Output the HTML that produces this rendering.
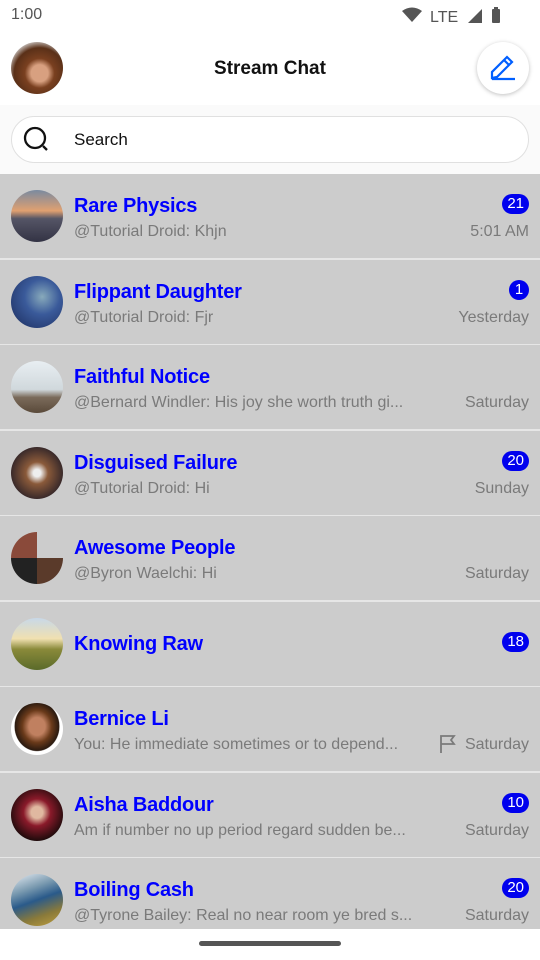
<!DOCTYPE html>
<html><head><meta charset="utf-8"><style>
*{margin:0;padding:0;box-sizing:border-box}
body{width:540px;height:960px;overflow:hidden;background:#fff;font-family:"Liberation Sans",Roboto,sans-serif;position:relative}
.abs{position:absolute}
.row{position:absolute;left:0;width:540px;height:84px;background:#cccccc}
.av{position:absolute;left:11px;top:16px;width:52px;height:52px;border-radius:50%}
.t{position:absolute;left:74px;top:21px;font-size:20px;font-weight:bold;color:#0000ff;white-space:nowrap;letter-spacing:-0.2px}
.s{position:absolute;left:74px;top:49px;font-size:16px;color:#7a7a7a;white-space:nowrap}
.d{position:absolute;right:11px;top:49px;font-size:16px;color:#7a7a7a}
.b{position:absolute;right:11px;top:20px;height:20px;min-width:20px;padding:0 5px;border-radius:10px;background:#0000ee;color:#fff;font-size:15px;line-height:20px;text-align:center}
</style></head><body>
<div class="abs" style="left:11px;top:6px;font-size:16px;color:#555">1:00</div>
<svg class="abs" style="left:402px;top:6px" width="110" height="20" viewBox="0 0 110 20">
<path d="M0 5 Q10 -2 20 5 L10 16 Z" fill="#555"/>
<text x="28" y="16" font-size="16" fill="#555" font-family="Liberation Sans">LTE</text>
<path d="M66 17 L80 3 L80 17 Z" fill="#555"/>
<rect x="90" y="3" width="8" height="14" rx="1" fill="#555"/><rect x="92" y="1" width="4" height="3" fill="#555"/>
</svg>
<div class="abs" style="left:11px;top:42px;width:52px;height:52px;border-radius:50%;background:radial-gradient(circle at 55% 60%,#d8a080 0 20%,#7a4020 35%,#5a3018 60%,#ddd 80%)"></div>
<div class="abs" style="left:0;width:540px;top:58px;text-align:center;font-size:19px;font-weight:bold;color:#111">Stream Chat</div>
<div class="abs" style="left:477px;top:42px;width:52px;height:52px;border-radius:50%;background:#fff;box-shadow:0 1px 4px rgba(0,0,0,.25)"></div>
<svg class="abs" style="left:489px;top:54px" width="28" height="28" viewBox="0 0 28 28"><path d="M3 24 L3 18 L18 3 L23 8 L8 23 Z M15 6 L20 11 M3 25 L26 25" fill="none" stroke="#005fff" stroke-width="2.2"/></svg>
<div class="abs" style="left:0;top:105px;width:540px;height:69px;background:#fafafa"></div>
<div class="abs" style="left:11px;top:116px;width:518px;height:47px;border-radius:24px;background:#fff;border:1px solid #e0e0e0"></div>
<svg class="abs" style="left:22px;top:126px" width="30" height="28" viewBox="0 0 30 28"><circle cx="13" cy="12" r="10" fill="none" stroke="#111" stroke-width="2.3"/><path d="M21 20 L25 24" stroke="#111" stroke-width="2.3"/></svg>
<div class="abs" style="left:74px;top:130px;font-size:17px;color:#111">Search</div>
<div class="abs" style="left:0;top:174px;width:540px;height:755px;background:#e6e6e6"></div>

<div class="row" style="top:174px"><div class="av" style="background:linear-gradient(#7a8aa0,#e0a070 40%,#556 55%,#334 100%)"></div><div class="t">Rare Physics</div><div class="s">@Tutorial Droid: Khjn</div><div class="b">21</div><div class="d">5:01 AM</div></div>
<div class="row" style="top:259.5px"><div class="av" style="background:radial-gradient(circle at 60% 40%,#8ab 0,#3a5a9a 40%,#1a2a5a 100%)"></div><div class="t">Flippant Daughter</div><div class="s">@Tutorial Droid: Fjr</div><div class="b">1</div><div class="d">Yesterday</div></div>
<div class="row" style="top:345px"><div class="av" style="background:linear-gradient(#e8eef2 0,#d0d8dc 55%,#7a6a5a 70%,#5a4a3a 100%)"></div><div class="t">Faithful Notice</div><div class="s">@Bernard Windler: His joy she worth truth gi...</div><div class="d">Saturday</div></div>
<div class="row" style="top:430.5px"><div class="av" style="background:radial-gradient(circle,#eee 0 10%,#8a5a3a 30%,#3a2a2a 70%)"></div><div class="t">Disguised Failure</div><div class="s">@Tutorial Droid: Hi</div><div class="b">20</div><div class="d">Sunday</div></div>
<div class="row" style="top:516px"><div class="av" style="background:conic-gradient(#ccc 0 25%,#5a3a2a 0 50%,#222 0 75%,#8a4a3a 0)"></div><div class="t">Awesome People</div><div class="s">@Byron Waelchi: Hi</div><div class="d">Saturday</div></div>
<div class="row" style="top:601.5px"><div class="av" style="background:linear-gradient(#c8d8e8,#f0e0b0 40%,#8a8a3a 60%,#5a6a2a 100%)"></div><div class="t" style="top:31px">Knowing Raw</div><div class="b" style="top:30px">18</div></div>
<div class="row" style="top:687px"><div class="av" style="background:radial-gradient(ellipse at 50% 45%,#c08060 0 22%,#6a3a1a 40%,#2a1a10 60%,#fff 62%)"></div><div class="t">Bernice Li</div><div class="s">You: He immediate sometimes or to depend...</div>
<svg class="abs" style="left:439px;top:47px" width="18" height="20" viewBox="0 0 18 20"><path d="M2 19 V2 H15 L12 6 L15 10 H2" fill="none" stroke="#7a7a7a" stroke-width="1.8"/></svg><div class="d">Saturday</div></div>
<div class="row" style="top:772.5px"><div class="av" style="background:radial-gradient(circle at 50% 45%,#e0b8a0 0 15%,#8a1a2a 35%,#1a0a0a 75%)"></div><div class="t">Aisha Baddour</div><div class="s">Am if number no up period regard sudden be...</div><div class="b">10</div><div class="d">Saturday</div></div>
<div class="row" style="top:858px;height:71px"><div class="av" style="background:linear-gradient(160deg,#e8eef4 0,#7a9ab0 30%,#2a5a8a 50%,#8a7a3a 75%,#c0a040 100%)"></div><div class="t">Boiling Cash</div><div class="s">@Tyrone Bailey: Real no near room ye bred s...</div><div class="b">20</div><div class="d">Saturday</div></div>
<div class="abs" style="left:0;top:929px;width:540px;height:31px;background:#fff"></div>
<div class="abs" style="left:199px;top:941px;width:142px;height:5px;border-radius:3px;background:#555"></div>
</body></html>
